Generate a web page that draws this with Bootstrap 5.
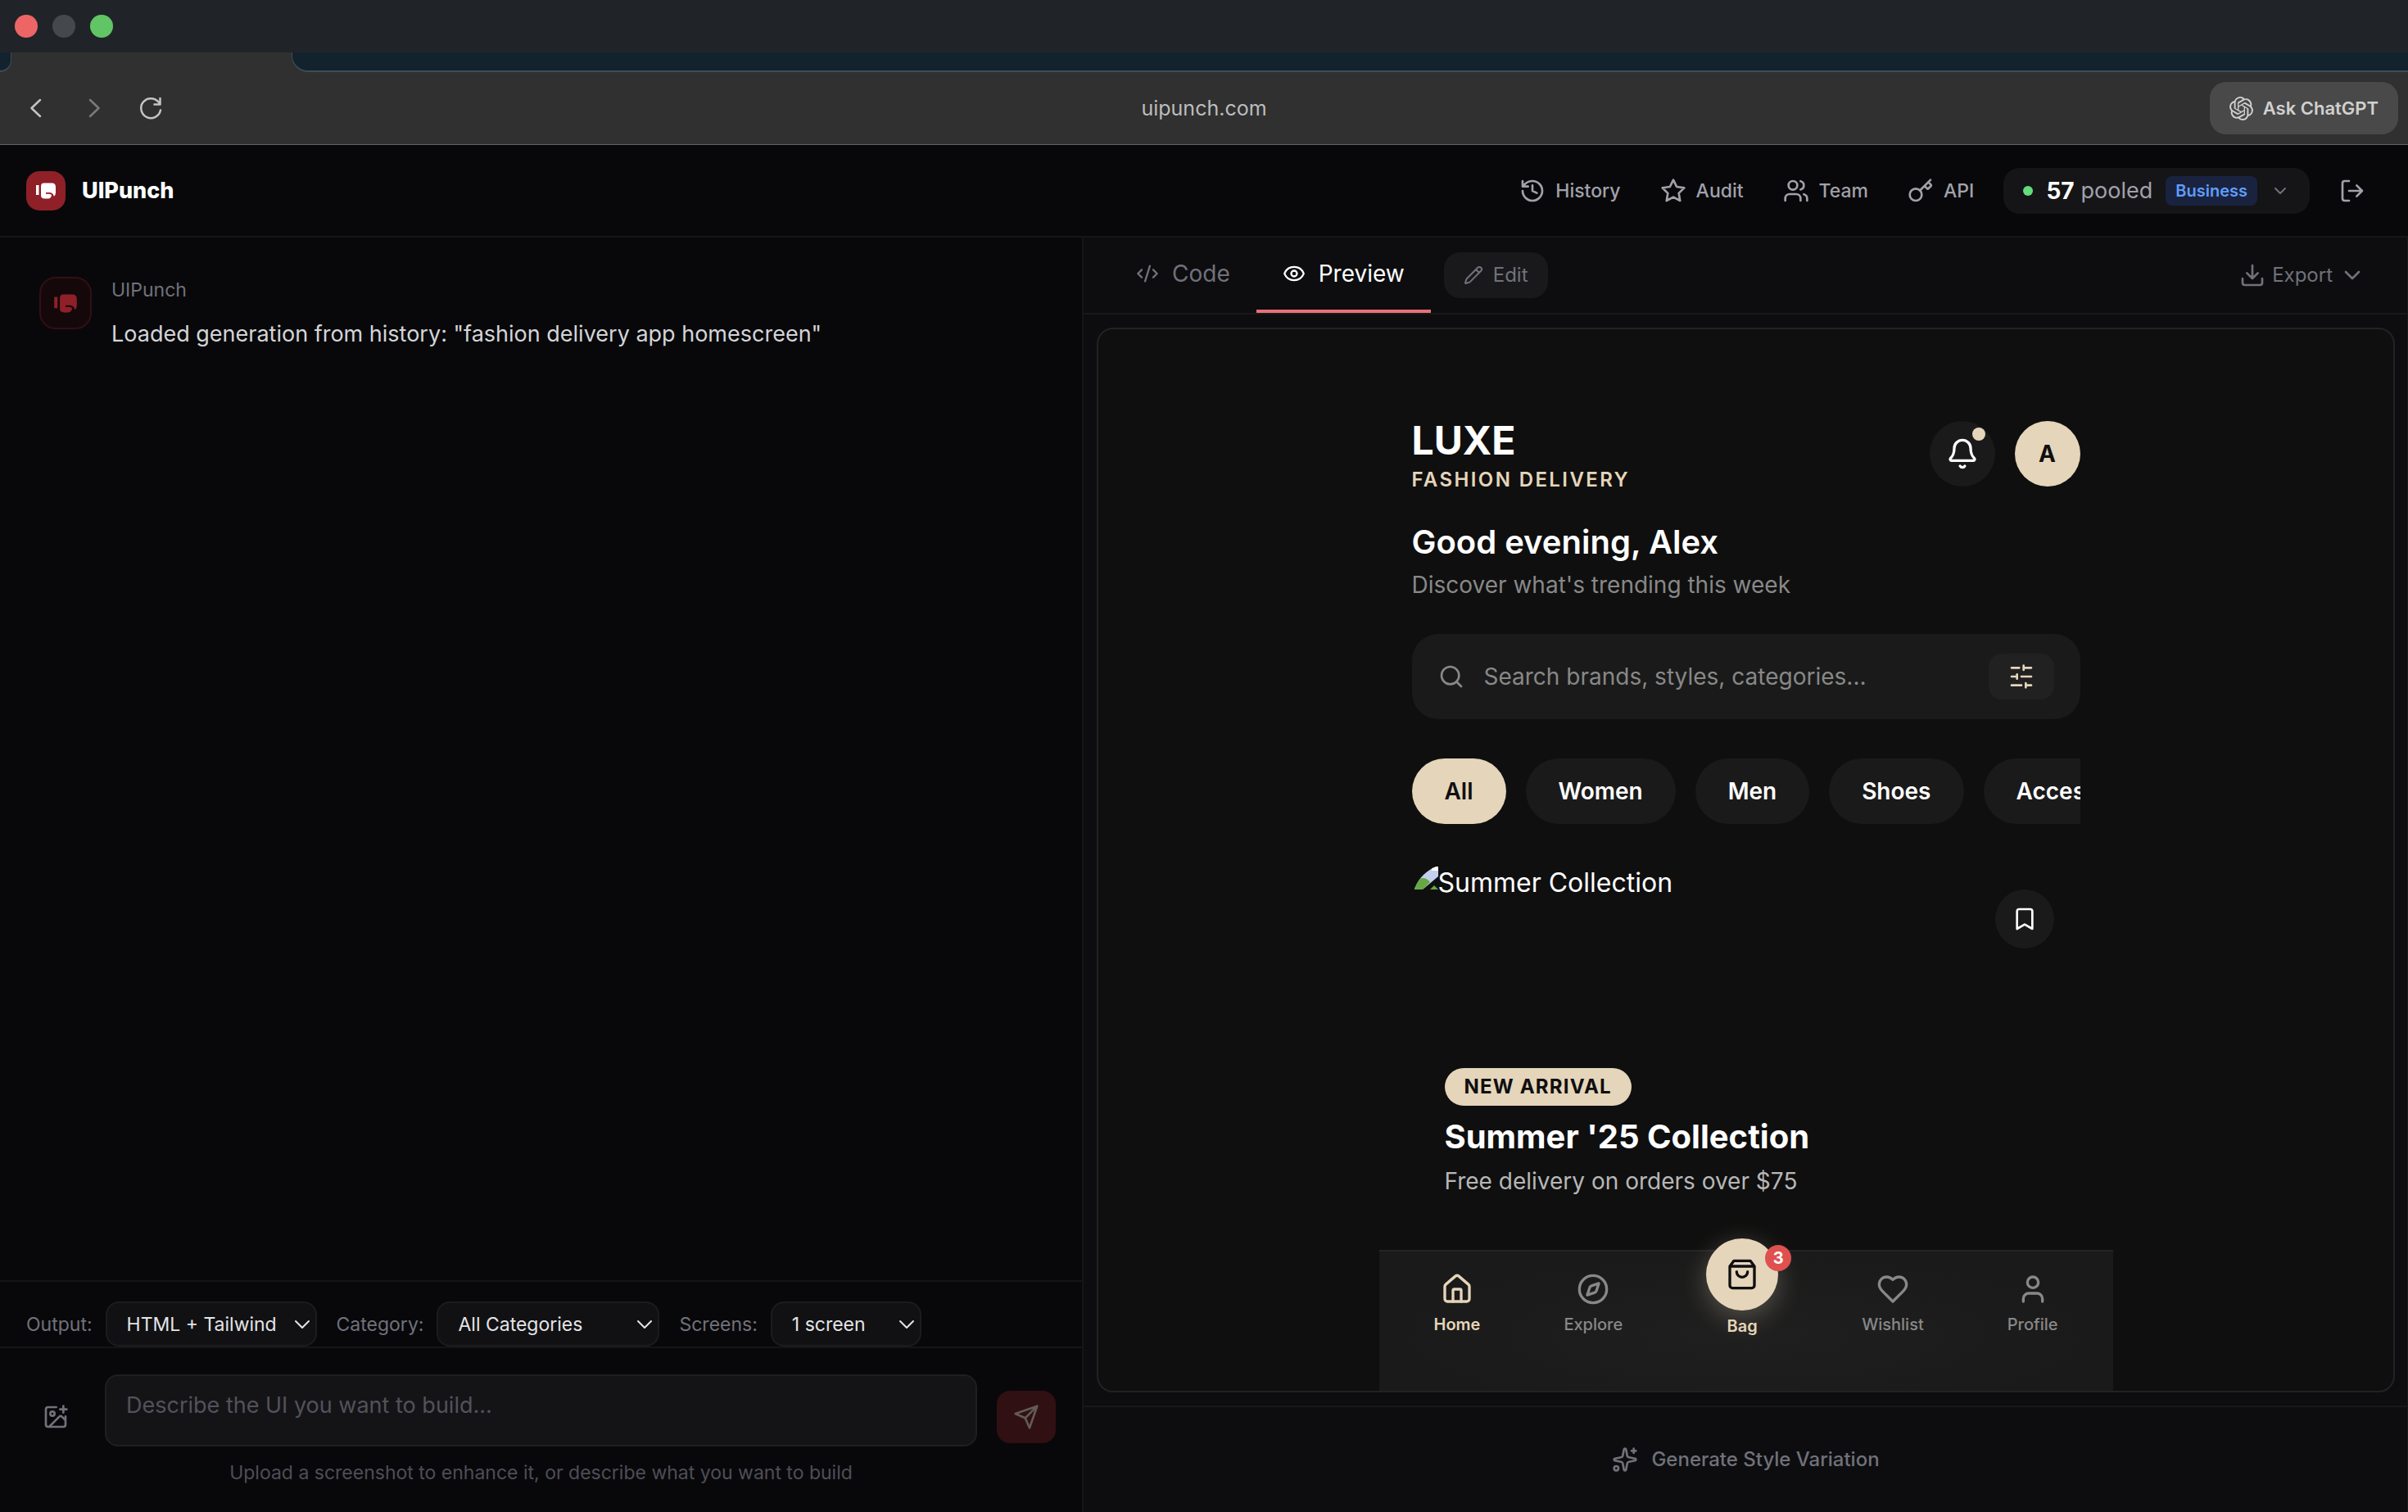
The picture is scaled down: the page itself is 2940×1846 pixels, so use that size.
<!DOCTYPE html>
<html lang="en" data-bs-theme="dark">
<head>
<meta charset="utf-8">
<meta name="viewport" content="width=device-width, initial-scale=1">
<title>UIPunch</title>
<link href="https://cdn.jsdelivr.net/npm/bootstrap@5.3.0/dist/css/bootstrap.min.css" rel="stylesheet">
<style>
  body { font-family: Inter, "Liberation Sans", sans-serif; font-size: 23px; line-height: 32px; background: #08080a; color: #a1a1aa; overflow: hidden; }
  a { color: inherit; text-decoration: none; }
  button { border: 0; background: none; color: inherit; padding: 0; font: inherit; }
  svg { display: block; flex: none; }
  .ico { fill: none; stroke: currentColor; stroke-width: 2; stroke-linecap: round; stroke-linejoin: round; width: 32px; height: 32px; }
  .ico-24 { width: 24px; height: 24px; }
  .ico-28 { width: 28px; height: 28px; }
  .ico-40 { width: 40px; height: 40px; }
  .text-dim { color: #71717a; }
  .min-h-0 { min-height: 0; }

  /* browser window */
  .titlebar { height: 64px; padding: 0 18px; gap: 18px; background: #202428; }
  .light { width: 28px; height: 28px; border-radius: 50%; }
  .light-close { background: #ee6566; }
  .light-min { background: #45484c; }
  .light-max { background: #62c565; }
  .tabstrip { height: 24px; background: #303030; }
  .tabgap { background: #12232e; border-bottom: 2px solid #3d4d58; }
  .tabgap-start { width: 14px; border-right: 1px solid #3d4d58; border-bottom-right-radius: 20px; }
  .tabgap-end { margin-left: 342px; border-left: 1px solid #3d4d58; border-bottom-left-radius: 20px; }
  .addressbar { height: 89px; background: #303030; border-bottom: 1px solid #636363; padding: 0 12px; color: #c4c4c4; }
  .addressbar .side { flex: 1 1 0; gap: 38px; }
  .address { font-size: 25px; color: #bdbdbd; }
  .forward { opacity: .5; }
  .ask { height: 64px; padding: 0 24px; border-radius: 20px; background: #494949; color: #d0d0d0; font-size: 22px; font-weight: 600; gap: 12px; }

  /* app header */
  .apphead { height: 113px; padding: 0 52px 0 32px; border-bottom: 2px solid #151517; }
  .brand { gap: 20px; }
  .brandmark { width: 48px; height: 48px; border-radius: 16px; background: #8f2028; color: #fff; }
  .brandname { font-size: 27px; font-weight: 800; color: #fff; }
  .mainnav { gap: 36px; font-weight: 500; }
  .navlinks { gap: 48px; }
  .navlinks a { gap: 12px; }
  .pool { height: 56px; padding: 0 24px; border-radius: 20px; background: #151517; font-size: 28px; }
  .pool-dot { width: 12px; height: 12px; border-radius: 50%; background: #63dc7d; }
  .pool-unit { font-size: 27px; }
  .plan { padding: 2px 12px; border-radius: 8px; background: #19233f; color: #609dfa; font-size: 20px; font-weight: 600; }

  /* chat side */
  .chatside { width: 45%; border-right: 2px solid #151517; }
  .chatlog { padding: 48px; gap: 24px; }
  .botmark { width: 64px; height: 64px; border-radius: 20px; background: #15080b; border: 2px solid #301015; color: #8f2028; }
  .botmsg { font-size: 27px; line-height: 44px; color: #d4d4d8; margin-top: 16px; }
  .options { padding: 24px 32px 0; border-top: 2px solid #151517; gap: 24px; color: #71717a; }
  .options .form-select { width: auto; height: 55px; padding: 0 36px 0 24px; font-size: 23px; line-height: 32px; color: #e4e4e7; border: 2px solid #1c1c1f; border-radius: 16px; background: #111113 url("data:image/svg+xml,%3Csvg xmlns='http://www.w3.org/2000/svg' viewBox='0 0 20 12' fill='none' stroke='%23e4e4e7' stroke-width='2' stroke-linecap='round' stroke-linejoin='round'%3E%3Cpath d='M2 2l8 8 8-8'/%3E%3C/svg%3E") no-repeat right 6px center / 20px 12px; }
  #output { width: 258px; } #category { width: 272px; } #screens { width: 184px; }
  .composer { border-top: 2px solid #151517; padding: 32px; }
  .composer-row { gap: 24px; }
  .attach { width: 72px; height: 64px; margin-bottom: 4px; }
  .prompt { height: 88px; padding: 16px 24px; resize: none; font-size: 27px; line-height: 40px; background: #141416; border: 2px solid #1f1f22; border-radius: 16px; }
  .prompt::placeholder { color: #52525b; }
  .send { width: 72px; height: 64px; margin-bottom: 4px; border-radius: 16px; background: #301013; color: #635b58; }
  .hint { color: #4e4e57; margin-top: 16px; }

  /* preview side */
  .viewside { background: #0d0d0f; box-shadow: inset -1px 0 #1c1c1e; font-size: 24px; }
  .viewtabs { height: 94px; padding: 0 52px 0 32px; border-bottom: 2px solid #18181a; }
  .viewtab { padding: 0 32px; gap: 16px; font-size: 28px; border-bottom: 4px solid transparent; color: #71717a; }
  .viewtab.active { color: #fff; border-color: #e86f7b; }
  .editbtn { height: 56px; padding: 0 24px; gap: 12px; margin-left: 16px; border-radius: 20px; background: #19191c; }
  .frame { margin: 16px; border: 2px solid #222224; border-radius: 20px; background: #0f0f0f; overflow: hidden; }
  .variation { height: 130px; border-top: 2px solid #18181a; gap: 16px; font-weight: 500; }

  /* phone mock-up */
  .phone { width: 896px; color: #fff; }
  .phone-body { padding: 112px 40px 0; overflow: hidden; }
  .shopname { font-size: 48px; line-height: 48px; font-weight: 700; }
  .shopsub { font-weight: 600; letter-spacing: .1em; color: #e5d5ba; margin-top: 8px; }
  .circle { width: 80px; height: 80px; border-radius: 50%; background: #1a1a1a; }
  .circle-sand { background: #e5d5ba; color: #0f0f0f; font-size: 28px; font-weight: 700; }
  .newdot { top: 8px; right: 12px; width: 16px; height: 16px; border-radius: 50%; background: #e5d5ba; }
  .greet { font-size: 40px; line-height: 56px; font-weight: 600; margin: 32px 0 4px; }
  .greetsub { font-size: 28px; line-height: 40px; color: #888; margin-bottom: 40px; }
  .search { height: 104px; padding: 0 32px; gap: 24px; border-radius: 32px; background: #1a1a1a; color: #888; }
  .search input { font-size: 28px; line-height: 40px; background: none; border: 0; padding: 0; box-shadow: none; }
  .search input::placeholder { color: #888; }
  .filterbtn { width: 80px; height: 56px; border-radius: 16px; background: #212121; color: #e5d5ba; }
  .chips { gap: 24px; margin: 48px 0; overflow: hidden; }
  .chip { flex: none; height: 80px; padding: 0 40px; border-radius: 40px; background: #1a1a1a; font-size: 28px; font-weight: 600; color: #fff; }
  .chip.active { background: #e5d5ba; color: #0f0f0f; }
  .hero { height: 448px; border-radius: 48px; overflow: hidden; }
  .hero-alt { font-size: 32px; line-height: 48px; }
  .hero-save { top: 32px; right: 32px; width: 72px; height: 72px; }
  .hero-copy { left: 40px; bottom: 40px; }
  .newpill { padding: 8px 24px; border-radius: 24px; background: #e5d5ba; color: #0f0f0f; line-height: 30px; font-weight: 700; letter-spacing: .05em; }
  .herotitle { font-size: 40px; line-height: 52px; font-weight: 700; margin: 12px 0 8px; }
  .herosub { font-size: 28px; line-height: 40px; color: #b7b7b7; }
  .phone-nav { padding: 26px 16px 64px; border-top: 2px solid #242424; background: radial-gradient(ellipse at 50% 60%, #1f1f1f, #1a1a1a 70%); }
  .phone-nav a { font-size: 20px; line-height: 30px; font-weight: 500; color: #888; gap: 8px; }
  .phone-nav a.on { color: #e5d5ba; font-weight: 600; }
  .phone-nav a.bag { margin-top: -42px; gap: 4px; }
  .bagdisc { width: 88px; height: 88px; border-radius: 50%; background: #e5d5ba; color: #0f0f0f; box-shadow: 0 8px 32px rgba(229,213,186,.3); }
  .bagcount { top: 8px; right: -16px; width: 32px; height: 32px; border-radius: 50%; background: #de514f; color: #fff; font-size: 20px; font-weight: 700; }
</style>
</head>
<body>
<svg width="0" height="0" class="position-absolute" aria-hidden="true">
  <symbol id="glove" viewBox="0 0 24 20"><path fill="currentColor" d="M0 3h3.5v12H0zM9.500 .5h10q4.500 0 4.500 5v7q0 3-2.200 4.200Q21 12 16 12h-4v1.800h4q2.500 0 3 1.500Q18.500 19.500 14.500 19.500h-4Q6 19.500 6 15.500V4.500Q6 .5 9.500 .5z"/></symbol>
  <symbol id="chev" viewBox="0 0 24 24"><path d="m6 9 6 6 6-6"/></symbol>
</svg>
<div class="vh-100 d-flex flex-column">
  <div class="titlebar d-flex align-items-center">
    <span class="light light-close"></span><span class="light light-min"></span><span class="light light-max"></span>
  </div>
  <div class="tabstrip d-flex"><div class="tabgap tabgap-start"></div><div class="tabgap tabgap-end flex-grow-1"></div></div>
  <div class="addressbar d-flex align-items-center">
    <div class="side d-flex align-items-center">
      <button type="button" class="ms-3" aria-label="Back"><svg class="ico" viewBox="0 0 32 32"><path d="m21 6-10.500 10L21 26" stroke-width="2.500"/></svg></button>
      <button type="button" class="forward" aria-label="Forward"><svg class="ico" viewBox="0 0 32 32"><path d="m12 6 10.500 10L12 26" stroke-width="2.500"/></svg></button>
      <button type="button" aria-label="Reload"><svg class="ico" viewBox="0 0 32 32"><path stroke-width="2.500" d="M28 18.500A12 12 0 1 1 25.500 8.500L27.500 11M27.500 4v7.500h-7"/></svg></button>
    </div>
    <span class="address">uipunch.com</span>
    <div class="side d-flex justify-content-end">
      <button type="button" class="ask d-flex align-items-center"><svg width="29" height="29" viewBox="0 0 24 24" fill="currentColor"><path d="M22.2819 9.8211a5.9847 5.9847 0 0 0-.5157-4.9108 6.0462 6.0462 0 0 0-6.5098-2.9A6.0651 6.0651 0 0 0 4.9807 4.1818a5.9847 5.9847 0 0 0-3.9977 2.9 6.0462 6.0462 0 0 0 .7427 7.0966 5.98 5.98 0 0 0 .511 4.9107 6.051 6.051 0 0 0 6.5146 2.9001A5.9847 5.9847 0 0 0 13.2599 24a6.0557 6.0557 0 0 0 5.7718-4.2058 5.9894 5.9894 0 0 0 3.9977-2.9001 6.0557 6.0557 0 0 0-.7475-7.0729zm-9.022 12.6081a4.4755 4.4755 0 0 1-2.8764-1.0408l.1419-.0804 4.7783-2.7582a.7948.7948 0 0 0 .3927-.6813v-6.7369l2.02 1.1686a.071.071 0 0 1 .038.052v5.5826a4.504 4.504 0 0 1-4.4945 4.4944zm-9.6607-4.1254a4.4708 4.4708 0 0 1-.5346-3.0137l.142.0852 4.783 2.7582a.7712.7712 0 0 0 .7806 0l5.8428-3.3685v2.3324a.0804.0804 0 0 1-.0332.0615L9.74 19.9502a4.4992 4.4992 0 0 1-6.1408-1.6464zM2.3408 7.8956a4.485 4.485 0 0 1 2.3655-1.9728V11.6a.7664.7664 0 0 0 .3879.6765l5.8144 3.3543-2.0201 1.1685a.0757.0757 0 0 1-.071 0l-4.8303-2.7865A4.504 4.504 0 0 1 2.3408 7.872zm16.5963 3.8558L13.1038 8.364 15.1192 7.2a.0757.0757 0 0 1 .071 0l4.8303 2.7913a4.4944 4.4944 0 0 1-.6765 8.1042v-5.6772a.79.79 0 0 0-.407-.667zm2.0107-3.0231l-.142-.0852-4.7735-2.7818a.7759.7759 0 0 0-.7854 0L9.409 9.2297V6.8974a.0662.0662 0 0 1 .0284-.0615l4.8303-2.7866a4.4992 4.4992 0 0 1 6.6802 4.66zM8.3065 12.863l-2.02-1.1638a.0804.0804 0 0 1-.038-.0567V6.0742a4.4992 4.4992 0 0 1 7.3757-3.4537l-.142.0805L8.704 5.459a.7948.7948 0 0 0-.3927.6813zm1.0976-2.3654l2.602-1.4998 2.6069 1.4998v2.9994l-2.5974 1.4997-2.6067-1.4997Z"/></svg>Ask ChatGPT</button>
    </div>
  </div>

  <header class="apphead d-flex align-items-center justify-content-between">
    <a href="#" class="brand d-flex align-items-center"><span class="brandmark d-flex align-items-center justify-content-center"><svg width="24" height="20"><use href="#glove"/></svg></span><span class="brandname">UIPunch</span></a>
    <nav class="mainnav d-flex align-items-center">
      <div class="navlinks d-flex">
        <a href="#" class="d-flex align-items-center"><svg class="ico" viewBox="0 0 24 24"><path d="M3 12a9 9 0 1 0 9-9 9.750 9.750 0 0 0-6.740 2.740L3 8M3 3v5h5M12 7v5l4 2"/></svg>History</a>
        <a href="#" class="d-flex align-items-center"><svg class="ico" viewBox="0 0 24 24"><path d="M12 2l3.090 6.260L22 9.270l-5 4.870 1.180 6.880L12 17.770l-6.180 3.250L7 14.140 2 9.270l6.910-1.010z"/></svg>Audit</a>
        <a href="#" class="d-flex align-items-center"><svg class="ico" viewBox="0 0 24 24"><path d="M16 21v-2a4 4 0 0 0-4-4H6a4 4 0 0 0-4 4v2M22 21v-2a4 4 0 0 0-3-3.870M16 3.130a4 4 0 0 1 0 7.750"/><circle cx="9" cy="7" r="4"/></svg>Team</a>
        <a href="#" class="d-flex align-items-center"><svg class="ico" viewBox="0 0 24 24"><path d="m15.500 7.500 2.300 2.300a1 1 0 0 0 1.400 0l2.100-2.100a1 1 0 0 0 0-1.400L19 4M21 2l-9.600 9.600"/><circle cx="7.500" cy="15.500" r="5.500"/></svg>API</a>
      </div>
      <button type="button" class="pool d-flex align-items-center"><span class="pool-dot me-3"></span><span class="text-white fw-bold me-2">57</span><span class="pool-unit fw-normal">pooled</span><span class="plan mx-3">Business</span><svg class="ico ico-24 text-dim"><use href="#chev"/></svg></button>
      <button type="button" aria-label="Log out"><svg class="ico" viewBox="0 0 24 24"><path d="M9 21H5a2 2 0 0 1-2-2V5a2 2 0 0 1 2-2h4M16 17l5-5-5-5M21 12H9"/></svg></button>
    </nav>
  </header>

  <div class="d-flex flex-grow-1 min-h-0">
    <section class="chatside d-flex flex-column">
      <div class="chatlog d-flex flex-grow-1">
        <span class="botmark d-flex align-items-center justify-content-center flex-shrink-0"><svg width="28" height="23"><use href="#glove"/></svg></span>
        <div>
          <div class="text-dim">UIPunch</div>
          <div class="botmsg">Loaded generation from history: "fashion delivery app homescreen"</div>
        </div>
      </div>
      <div class="options d-flex align-items-center">
        <div class="d-flex align-items-center gap-3"><label for="output">Output:</label><select id="output" class="form-select"><option>HTML + Tailwind</option></select></div>
        <div class="d-flex align-items-center gap-3"><label for="category">Category:</label><select id="category" class="form-select"><option>All Categories</option></select></div>
        <div class="d-flex align-items-center gap-3"><label for="screens">Screens:</label><select id="screens" class="form-select"><option>1 screen</option></select></div>
      </div>
      <form class="composer">
        <div class="composer-row d-flex align-items-end">
          <button type="button" class="attach d-flex align-items-center justify-content-center flex-shrink-0 text-dim" aria-label="Add image"><svg class="ico" viewBox="0 0 24 24"><path d="M16 5h6M19 2v6M21 11.500V19a2 2 0 0 1-2 2H5a2 2 0 0 1-2-2V5a2 2 0 0 1 2-2h7.500M21 15l-3.086-3.086a2 2 0 0 0-2.828 0L6 21"/><circle cx="9" cy="9" r="2"/></svg></button>
          <textarea class="prompt form-control" rows="1" aria-label="Prompt" placeholder="Describe the UI you want to build..."></textarea>
          <button type="button" class="send d-flex align-items-center justify-content-center flex-shrink-0" aria-label="Send"><svg class="ico" viewBox="0 0 24 24"><path d="m22 2-7 20-4-9-9-4ZM22 2 11 13"/></svg></button>
        </div>
        <div class="hint text-center">Upload a screenshot to enhance it, or describe what you want to build</div>
      </form>
    </section>

    <section class="viewside d-flex flex-column flex-grow-1">
      <div class="viewtabs d-flex">
        <button type="button" class="viewtab d-flex align-items-center"><svg class="ico ico-28" viewBox="0 0 24 24"><path d="m18 16 4-4-4-4M6 8l-4 4 4 4M14.500 4l-5 16"/></svg>Code</button>
        <button type="button" class="viewtab active d-flex align-items-center"><svg class="ico ico-28" viewBox="0 0 24 24"><path d="M2.062 12.348a1 1 0 0 1 0-.696 10.750 10.750 0 0 1 19.876 0 1 1 0 0 1 0 .696 10.750 10.750 0 0 1-19.876 0"/><circle cx="12" cy="12" r="3"/></svg>Preview</button>
        <button type="button" class="editbtn d-flex align-items-center align-self-center text-dim"><svg class="ico ico-24" viewBox="0 0 24 24"><path d="M21.174 6.812a1 1 0 0 0-3.986-3.987L3.842 16.174a2 2 0 0 0-.5.830l-1.321 4.352a.5.5 0 0 0 .623.622l4.353-1.320a2 2 0 0 0 .830-.497zM15 5l4 4"/></svg>Edit</button>
        <button type="button" class="d-flex align-items-center gap-2 text-dim ms-auto"><svg class="ico" viewBox="0 0 24 24"><path d="M12 15V3M21 15v4a2 2 0 0 1-2 2H5a2 2 0 0 1-2-2v-4M7 10l5 5 5-5"/></svg>Export<svg class="ico"><use href="#chev"/></svg></button>
      </div>
      <div class="frame d-flex justify-content-center flex-grow-1 min-h-0">
        <div class="phone d-flex flex-column">
          <div class="phone-body flex-grow-1">
            <div class="d-flex justify-content-between align-items-start">
              <div><div class="shopname">LUXE</div><div class="shopsub">FASHION DELIVERY</div></div>
              <div class="d-flex gap-4">
                <button type="button" class="circle position-relative d-flex align-items-center justify-content-center text-white" aria-label="Notifications"><svg class="ico ico-40" viewBox="0 0 24 24"><path d="M10.268 21a2 2 0 0 0 3.464 0M3.262 15.326A1 1 0 0 0 4 17h16a1 1 0 0 0 .740-1.673C19.410 13.956 18 12.499 18 8A6 6 0 0 0 6 8c0 4.499-1.411 5.956-2.738 7.326"/></svg><span class="newdot position-absolute"></span></button>
                <span class="circle circle-sand d-flex align-items-center justify-content-center">A</span>
              </div>
            </div>
            <div class="greet">Good evening, Alex</div>
            <div class="greetsub">Discover what's trending this week</div>
            <div class="search d-flex align-items-center">
              <svg class="ico" viewBox="0 0 24 24"><circle cx="11" cy="11" r="8"/><path d="m21 21-4.300-4.300"/></svg>
              <input type="search" class="form-control" aria-label="Search" placeholder="Search brands, styles, categories...">
              <button type="button" class="filterbtn d-flex align-items-center justify-content-center flex-shrink-0" aria-label="Filters"><svg class="ico" viewBox="0 0 24 24"><path d="M21 4h-7M10 4H3M21 12h-9M8 12H3M21 20h-5M12 20H3M14 2v4M8 10v4M16 18v4"/></svg></button>
            </div>
            <div class="chips d-flex"><button type="button" class="chip active">All</button><button type="button" class="chip">Women</button><button type="button" class="chip">Men</button><button type="button" class="chip">Shoes</button><button type="button" class="chip">Accessories</button></div>
            <div class="hero position-relative">
              <div class="hero-alt d-flex"><svg width="32" height="32" viewBox="0 0 32 32"><path fill="#c3cfee" d="M2 5h30v14L19 32H2z"/><path fill="#fff" d="M24 4h8v5h-8z"/><path fill="#67a744" d="M2 32c1-9 6-14 11-14 4 0 7 2 9 5l-9 9z"/><path fill="#0f0f0f" d="M32 16v6L22 32h-9z"/><path fill="#67a744" d="M22 32l5-5 5 5z"/></svg>Summer Collection</div>
              <button type="button" class="hero-save circle position-absolute d-flex align-items-center justify-content-center text-white" aria-label="Save"><svg class="ico" viewBox="0 0 24 24"><path d="m19 21-7-4-7 4V5a2 2 0 0 1 2-2h10a2 2 0 0 1 2 2z"/></svg></button>
              <div class="hero-copy position-absolute"><span class="newpill d-inline-block">NEW ARRIVAL</span><div class="herotitle">Summer '25 Collection</div><div class="herosub">Free delivery on orders over $75</div></div>
            </div>
          </div>
          <nav class="phone-nav d-flex justify-content-around align-items-start">
            <a href="#" class="on d-flex flex-column align-items-center"><svg class="ico ico-40" viewBox="0 0 24 24"><path d="M15 21v-8a1 1 0 0 0-1-1h-4a1 1 0 0 0-1 1v8"/><path d="M3 10a2 2 0 0 1 .709-1.528l7-5.999a2 2 0 0 1 2.582 0l7 5.999A2 2 0 0 1 21 10v9a2 2 0 0 1-2 2H5a2 2 0 0 1-2-2z"/></svg>Home</a>
            <a href="#" class="d-flex flex-column align-items-center"><svg class="ico ico-40" viewBox="0 0 24 24"><circle cx="12" cy="12" r="10"/><path d="m16.240 7.760-1.804 5.411a2 2 0 0 1-1.265 1.265L7.760 16.240l1.804-5.411a2 2 0 0 1 1.265-1.265z"/></svg>Explore</a>
            <a href="#" class="on bag d-flex flex-column align-items-center"><span class="bagdisc position-relative d-flex align-items-center justify-content-center"><svg class="ico ico-40" viewBox="0 0 24 24"><path d="M6 2 3 6v14a2 2 0 0 0 2 2h14a2 2 0 0 0 2-2V6l-3-4ZM3 6h18M16 10a4 4 0 0 1-8 0"/></svg><span class="bagcount position-absolute d-flex align-items-center justify-content-center">3</span></span>Bag</a>
            <a href="#" class="d-flex flex-column align-items-center"><svg class="ico ico-40" viewBox="0 0 24 24"><path d="M19 14c1.490-1.460 3-3.210 3-5.500A5.500 5.500 0 0 0 16.500 3c-1.760 0-3 .5-4.500 2-1.500-1.500-2.740-2-4.500-2A5.500 5.500 0 0 0 2 8.500c0 2.300 1.500 4.050 3 5.500l7 7Z"/></svg>Wishlist</a>
            <a href="#" class="d-flex flex-column align-items-center"><svg class="ico ico-40" viewBox="0 0 24 24"><path d="M19 21v-2a4 4 0 0 0-4-4H9a4 4 0 0 0-4 4v2"/><circle cx="12" cy="7" r="4"/></svg>Profile</a>
          </nav>
        </div>
      </div>
      <button type="button" class="variation d-flex align-items-center justify-content-center text-dim"><svg class="ico" viewBox="0 0 24 24"><path d="M11.017 2.814a1 1 0 0 1 1.966 0l1.051 5.558a2 2 0 0 0 1.594 1.594l5.558 1.051a1 1 0 0 1 0 1.966l-5.558 1.051a2 2 0 0 0-1.594 1.594l-1.051 5.558a1 1 0 0 1-1.966 0l-1.051-5.558a2 2 0 0 0-1.594-1.594l-5.558-1.051a1 1 0 0 1 0-1.966l5.558-1.051a2 2 0 0 0 1.594-1.594zM20 2v4M22 4h-4"/><circle cx="4" cy="20" r="2"/></svg>Generate Style Variation</button>
    </section>
  </div>
</div>
<script src="https://cdn.jsdelivr.net/npm/bootstrap@5.3.0/dist/js/bootstrap.bundle.min.js"></script>
</body>
</html>
